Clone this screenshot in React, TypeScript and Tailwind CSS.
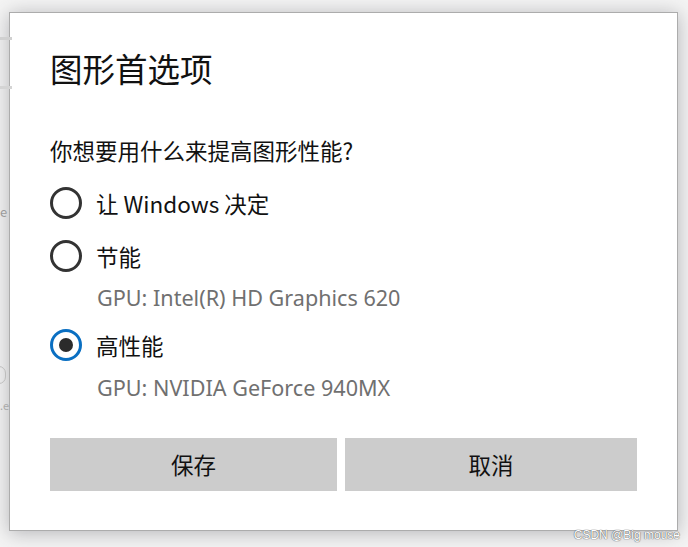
import React from "react";

const font = { fontFamily: '"Noto Sans CJK SC", "Noto Sans", sans-serif' };
const gpuFont = { fontFamily: '"Noto Sans", "Noto Sans CJK SC", sans-serif' };

function Radio({ checked }: { checked?: boolean }) {
  if (checked) {
    return (
      <div className="w-[32px] h-[32px] rounded-full border-[3px] border-[#0a6fc2] flex items-center justify-center shrink-0">
        <div className="w-[14px] h-[14px] rounded-full bg-[#2b2b2b]" />
      </div>
    );
  }
  return <div className="w-[32px] h-[32px] rounded-full border-[3px] border-[#333333] shrink-0" />;
}

export default function App() {
  return (
    <div className="relative w-[688px] h-[547px] overflow-hidden bg-[#f4f4f4]" style={font}>
      {/* window behind, on the left */}
      <div className="absolute left-0 top-[37px] w-[12px] h-[3px] bg-[#d0d0d0]" />
      <div className="absolute left-0 top-[86px] w-[12px] h-[3px] bg-[#d4d4d4]" />
      <div className="absolute left-0 top-[205px] text-[13px] leading-none text-[#9a9a9a]">e</div>
      <div className="absolute left-[-8px] top-[366px] w-[14px] h-[18px] rounded-full border border-[#bdbdbd]" />
      <div className="absolute left-0 top-[400px] text-[11px] leading-none text-[#a8a8a8]">.e</div>

      <div className="pl-[9px] pt-[12px]">
        <div className="w-[669px] h-[519px] bg-white border border-[#acacac] shadow-[0_2px_18px_rgba(60,60,70,0.35)] pl-[40px] pr-[40px] text-[#111111]">
          <div className="mt-[35px] h-[40px] flex items-center text-[32.5px] leading-none">图形首选项</div>
          <div className="mt-[47px] h-[30px] flex items-center text-[22.5px] leading-none">你想要用什么来提高图形性能?</div>

          <div className="mt-[18px] h-[40px] flex items-center gap-[14px]">
            <Radio />
            <span className="text-[22.5px] leading-none">让 Windows 决定</span>
          </div>

          <div className="mt-[13px] h-[40px] flex items-center gap-[14px]">
            <Radio />
            <span className="text-[22.5px] leading-none">节能</span>
          </div>
          <div className="mt-[7px] h-[30px] flex items-center pl-[47px] text-[21.6px] leading-none text-[#707070]" style={gpuFont}>
            GPU: Intel(R) HD Graphics 620
          </div>

          <div className="mt-[12px] h-[40px] flex items-center gap-[14px]">
            <Radio checked />
            <span className="text-[22.5px] leading-none">高性能</span>
          </div>
          <div className="mt-[8px] h-[30px] flex items-center pl-[47px] text-[21.6px] leading-none text-[#707070]" style={gpuFont}>
            GPU: NVIDIA GeForce 940MX
          </div>

          <div className="mt-[35px] flex gap-[8px]">
            <div className="w-[287px] h-[53px] bg-[#cccccc] flex items-center justify-center text-[22.5px] text-[#111]">保存</div>
            <div className="flex-1 h-[53px] bg-[#cccccc] flex items-center justify-center text-[22.5px] text-[#111]">取消</div>
          </div>
        </div>
      </div>

      <div
        className="absolute right-[8px] bottom-[6px] text-[12px] leading-none text-white"
        style={{ fontFamily: '"Liberation Sans", sans-serif', textShadow: "0 0 1px #555, 0 0 1px #555" }}
      >
        CSDN @Big mouse
      </div>
    </div>
  );
}
